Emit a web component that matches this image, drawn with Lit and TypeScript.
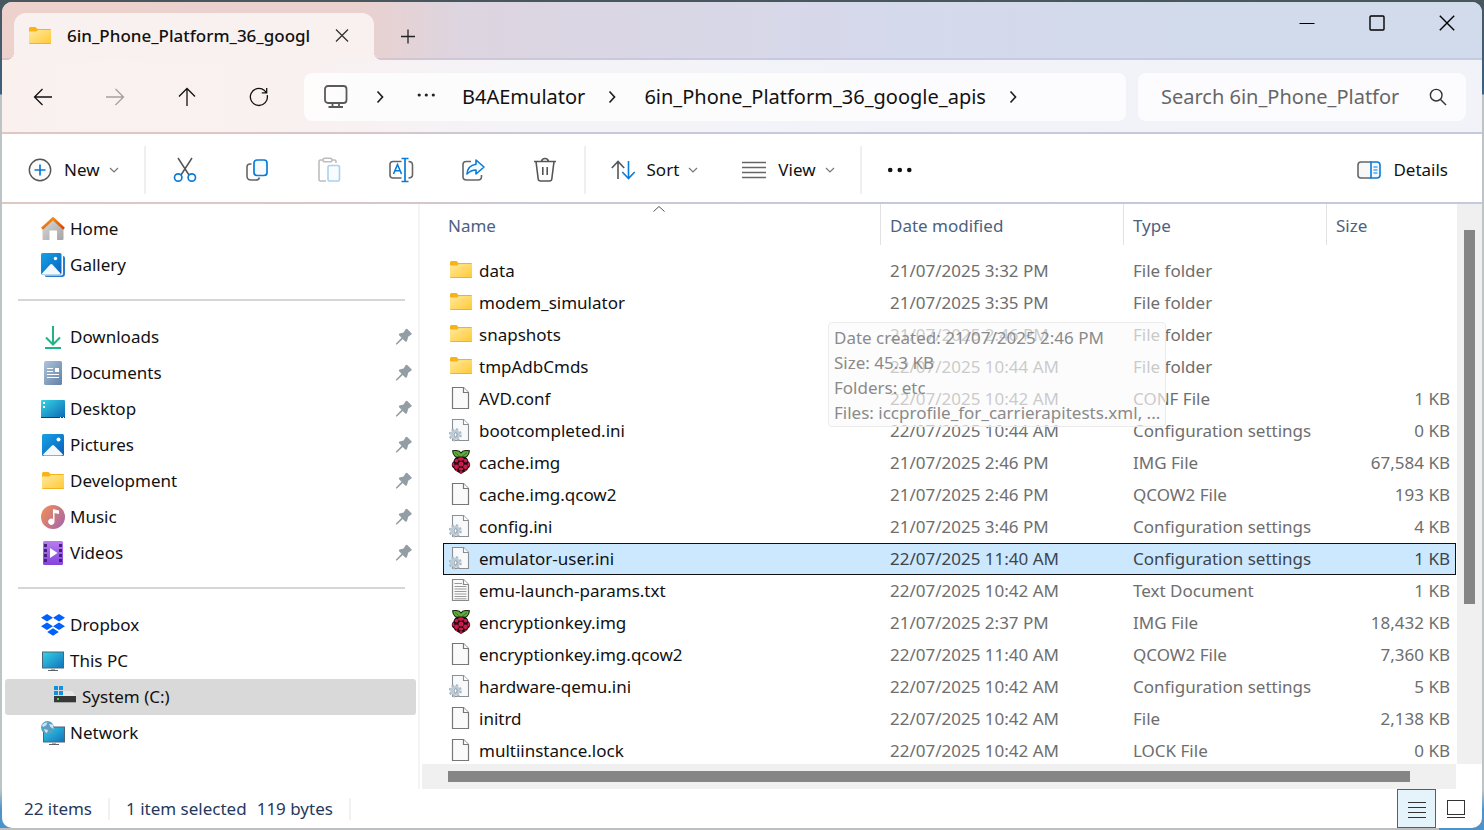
import { LitElement, html, css, TemplateResult } from "lit";
import { customElement, state } from "lit/decorators.js";
import { classMap } from "lit/directives/class-map.js";

type Kind = "folder" | "file" | "ini" | "img" | "txt";

interface Entry {
  kind: Kind;
  name: string;
  date: string;
  type: string;
  size: string;
}

const folderIcon = html`<svg width="24" height="24" viewBox="0 0 24 24" aria-hidden="true">
  <defs><linearGradient id="fold" x1="0" y1="0" x2="1" y2="1"><stop offset="0" stop-color="#ffe9a0" /><stop offset="1" stop-color="#ffc933" /></linearGradient></defs>
  <path d="M1 4.6Q1 3 2.4 3H7.5L9.5 5H22Q23 5 23 6V8H1Z" fill="#f8b318" />
  <path d="M1 7.4H8.3L10 6H23V19Q23 20 22 20H2Q1 20 1 19Z" fill="url(#fold)" />
  <path d="M1 19.2H23Q23 20 22 20H2Q1 20 1 19.2Z" fill="#f0a818" />
</svg>`;

const fileIcon = html`<svg width="24" height="24" viewBox="0 0 24 24" aria-hidden="true">
  <path d="M3.500 1.500H14.500L19.500 6.500V22.500H3.500Z" fill="#fafafa" stroke="#777" stroke-width="1.200" />
  <path d="M14.500 1.500V6.500H19.500" fill="#fff" stroke="#777" stroke-width="1.200" />
</svg>`;

const iniIcon = html`<svg width="24" height="24" viewBox="0 0 24 24" aria-hidden="true">
  <path d="M3.500 1.500H14.500L19.500 6.500V22.500H3.500Z" fill="#f7f9fa" stroke="#8b8f92" stroke-width="1.100" />
  <path d="M14.500 1.500V6.500H19.500" fill="#fff" stroke="#8b8f92" stroke-width="1.100" />
  <circle cx="6.200" cy="16.800" r="5.400" fill="none" stroke="#a9b8c4" stroke-width="2.400" stroke-dasharray="2.200 2.040" />
  <circle cx="6.200" cy="16.800" r="3.600" fill="#e6edf2" stroke="#bccad5" stroke-width="2.800" />
  <ellipse cx="6.600" cy="16.800" rx="1.500" ry="2" fill="#fff" stroke="#778591" stroke-width="0.900" />
</svg>`;

const txtIcon = html`<svg width="24" height="24" viewBox="0 0 24 24" aria-hidden="true">
  <path d="M3.500 1.500H14.500L19.500 6.500V22.500H3.500Z" fill="#fafafa" stroke="#8a8a8a" stroke-width="1.200" />
  <path d="M14.500 1.500V6.500H19.500" fill="#fff" stroke="#8a8a8a" stroke-width="1.200" />
  <path d="M5.500 5.500H13M5.500 8.500H17.500M5.500 11H17.500M5.500 13.500H17.500M5.500 16H17.500M5.500 18.500H17.500M5.500 20.800H17.500" stroke="#9a9a9a" stroke-width="1" />
</svg>`;

const berryIcon = html`<svg width="24" height="24" viewBox="0 0 24 24" aria-hidden="true">
  <path d="M12 8C8 8 4 6 3.6 .8C7 .2 10.500 .4 12 3C13.500 .4 17 .2 20.400 .8C20 6 16 8 12 8Z" fill="#5fae3c" stroke="#1d2a16" stroke-width="1.1" />
  <path d="M6 2.500L11 6.500M18 2.500L13 6.500" stroke="#2f6b1c" stroke-width=".8" />
  <path d="M12 6.500C16 6 19 8 19.500 11.500C22 13.500 21.500 17 19.300 18.300C18.500 21 15.500 22 12 24C8.500 22 5.500 21 4.700 18.300C2.500 17 2 13.500 4.500 11.500C5 8 8 6 12 6.500Z" fill="#1d0910" />
  <g fill="#cf1a4b">
    <ellipse cx="12" cy="9" rx="2.900" ry="1.700" /><ellipse cx="7.500" cy="10.600" rx="2" ry="1.700" transform="rotate(-35 7.500 10.600)" />
    <ellipse cx="16.500" cy="10.600" rx="2" ry="1.700" transform="rotate(35 16.500 10.600)" />
    <circle cx="12" cy="14" r="2.500" /><circle cx="7.500" cy="16.800" r="2.300" /><circle cx="16.500" cy="16.800" r="2.300" />
    <ellipse cx="4.400" cy="14.500" rx="1.100" ry="2" /><ellipse cx="19.600" cy="14.500" rx="1.100" ry="2" />
    <ellipse cx="12" cy="19" rx="2.200" ry="1.600" /><ellipse cx="12" cy="22" rx="1.600" ry=".9" />
    <circle cx="7.500" cy="20.200" r=".8" /><circle cx="16.500" cy="20.200" r=".8" />
  </g>
</svg>`;

const kindIcons: Record<Kind, TemplateResult> = { folder: folderIcon, file: fileIcon, ini: iniIcon, img: berryIcon, txt: txtIcon };

const homeIcon = html`<svg width="24" height="24" viewBox="0 0 24 24" aria-hidden="true">
  <defs>
    <linearGradient id="wall" x1="0" y1="0" x2="1" y2="1"><stop offset="0" stop-color="#dadada" /><stop offset="1" stop-color="#a4a4a4" /></linearGradient>
    <linearGradient id="roof" x1="0" y1="0" x2="1" y2="1"><stop offset="0" stop-color="#f5a11a" /><stop offset="1" stop-color="#d8430c" /></linearGradient>
  </defs>
  <path d="M1.500 11L12 2L22.500 11V22Q22.500 23 21.500 23H16V13.500H8.500V23H2.500Q1.500 23 1.500 22Z" fill="url(#wall)" />
  <path d="M1 11.800L12 1.500L23 11.800" fill="none" stroke="url(#roof)" stroke-width="2.800" stroke-linejoin="round" />
</svg>`;

const galleryIcon = html`<svg width="24" height="24" viewBox="0 0 24 24" aria-hidden="true">
  <defs><linearGradient id="gal" x1="0" y1="0" x2="1" y2="1"><stop offset="0" stop-color="#16a3e6" /><stop offset="1" stop-color="#0a62bd" /></linearGradient></defs>
  <path d="M22 3Q24 3.200 24 5V21Q24 24 21 24H6Q4 24 3.500 22.500H20Q22 22.500 22 20.500Z" fill="#2b7cc8" />
  <rect width="20.500" height="21.500" rx="1.500" fill="url(#gal)" />
  <path d="M1 20.500L9.200 11.600Q10.300 10.600 11.400 11.600L19.600 20.500Q19.300 21.500 18 21.500H2.500Q1.200 21.500 1 20.500Z" fill="#f3f9ff" />
  <circle cx="14.500" cy="5.500" r="1.700" fill="#fff" />
</svg>`;

const downloadsIcon = html`<svg width="24" height="24" viewBox="0 0 24 24" aria-hidden="true">
  <path d="M12 1V19M5 12.500L12 19.500L19 12.500M4 23H20" fill="none" stroke="#1fb487" stroke-width="2" />
</svg>`;

const documentsIcon = html`<svg width="24" height="24" viewBox="0 0 24 24" aria-hidden="true">
  <defs><linearGradient id="docs" x1="0" y1="0" x2="1" y2="1"><stop offset="0" stop-color="#afc4da" /><stop offset="1" stop-color="#6080a5" /></linearGradient></defs>
  <rect x="3" width="18" height="24" rx="1.500" fill="url(#docs)" />
  <path d="M6 7.500H12M6 10.500H12M6 13.500H18M6 16.500H18" stroke="#fff" stroke-width="1.200" />
  <rect x="14" y="7" width="4" height="4" fill="#fff" />
</svg>`;

const desktopIcon = html`<svg width="24" height="24" viewBox="0 0 24 24" aria-hidden="true">
  <defs><linearGradient id="desk" x1="0" y1="0" x2="1" y2="1"><stop offset="0" stop-color="#36d5e4" /><stop offset="1" stop-color="#0a67b5" /></linearGradient></defs>
  <rect y="3" width="24" height="18" rx="1" fill="url(#desk)" />
  <path d="M0 20H24V20.500Q24 21 23 21H1Q0 21 0 20.500Z" fill="#0c3f66" />
  <path d="M2 5H4V7H2ZM2 9H4V11H2Z" fill="#fff" /><path d="M19 20.500H20M22 20.500H23" stroke="#fff" />
</svg>`;

const picturesIcon = html`<svg width="24" height="24" viewBox="0 0 24 24" aria-hidden="true">
  <defs><linearGradient id="pic" x1="0" y1="0" x2="1" y2="1"><stop offset="0" stop-color="#17a2e6" /><stop offset="1" stop-color="#0a5eb8" /></linearGradient></defs>
  <rect x="1" y="1" width="22" height="22" rx="1.500" fill="url(#pic)" />
  <path d="M2 21.500L11 12.500Q12 11.700 13 12.500L22 21.500Q21.500 22.400 20.500 22.400H3.500Q2.500 22.400 2 21.500Z" fill="#f2f8fe" />
  <circle cx="17.500" cy="6.500" r="2" fill="#fff" />
</svg>`;

const musicIcon = html`<svg width="24" height="24" viewBox="0 0 24 24" aria-hidden="true">
  <defs><linearGradient id="mus" x1="0" y1="0.200" x2="1" y2="0.900"><stop offset="0" stop-color="#ee8d57" /><stop offset="1" stop-color="#a564ae" /></linearGradient></defs>
  <circle cx="12" cy="12" r="12" fill="url(#mus)" />
  <path d="M12 4L18 5.500V9L13.500 8V16.500A3.200 3.200 0 1 1 12 14Z" fill="#fff" />
</svg>`;

const videosIcon = html`<svg width="24" height="24" viewBox="0 0 24 24" aria-hidden="true">
  <defs><linearGradient id="vid" x1="0" y1="0" x2="0" y2="1"><stop offset="0" stop-color="#b97bf0" /><stop offset="1" stop-color="#8344dd" /></linearGradient></defs>
  <rect x="2" width="20" height="24" rx="1.500" fill="url(#vid)" />
  <path d="M4.500 3V22M19.500 3V22" stroke="#45207c" stroke-width="3" stroke-dasharray="3 2" />
  <path d="M9 7L16.500 12L9 17Z" fill="#fff" />
</svg>`;

const dropboxIcon = html`<svg width="24" height="24" viewBox="0 0 24 24" aria-hidden="true">
  <path d="M6 1L12 4.800L6 8.600L0 4.800ZM18 1L24 4.800L18 8.600L12 4.800ZM6 9.400L12 13.200L6 17L0 13.200ZM18 9.400L24 13.200L18 17L12 13.200ZM12 15.300L17.800 19L12 22.700L6.200 19Z" fill="#0061fe" />
</svg>`;

const pcIcon = html`<svg width="24" height="24" viewBox="0 0 24 24" aria-hidden="true">
  <defs><linearGradient id="pc" x1="0" y1="0" x2="1" y2="1"><stop offset="0" stop-color="#35d3e6" /><stop offset="1" stop-color="#1272bd" /></linearGradient></defs>
  <rect x="1.500" y="3" width="21" height="16" fill="url(#pc)" stroke="#4a6678" />
  <path d="M10 19.500H14V21H10Z" fill="#a9b1b8" /><path d="M7 21.500H17" stroke="#59626a" />
</svg>`;

const driveIcon = html`<svg width="24" height="24" viewBox="0 0 24 24" aria-hidden="true">
  <path d="M1 1H5V5H1ZM6 1H10V5H6ZM1 6H5V10H1ZM6 6H10V10H6Z" fill="#1291e0" />
  <path d="M10 6H19L23 11H10Z" fill="#e8e8e8" />
  <rect x="1" y="11" width="22" height="6" fill="#383838" /><path d="M1 17.500H23" stroke="#a9a9a9" />
  <rect x="4" y="13" width="2" height="2" fill="#38e02c" />
</svg>`;

const networkIcon = html`<svg width="24" height="24" viewBox="0 0 24 24" aria-hidden="true">
  <defs><linearGradient id="net" x1="0" y1="0" x2="1" y2="1"><stop offset="0" stop-color="#35cfe4" /><stop offset="1" stop-color="#1272bd" /></linearGradient></defs>
  <rect x="2.500" y="6" width="21" height="15" fill="url(#net)" stroke="#4a6678" />
  <path d="M11 21.500H15V23H11Z" fill="#a9b1b8" /><path d="M8 23.500H18" stroke="#59626a" />
  <circle cx="6.500" cy="6.500" r="6.500" fill="#5c9fc4" />
  <path d="M1 4Q4 1 6.500 1.500L5 4.500L2 6ZM8 3L12 3.500L12.500 8L9.500 6ZM3 8L7 9L6 12Q3.500 11 3 8Z" fill="#d3e6ee" />
</svg>`;

const pinIcon = html`<svg width="18" height="18" viewBox="0 0 18 18" aria-hidden="true">
  <path d="M10.800 .9Q11.500 .4 12.200 1L16.500 5.200Q17.100 5.900 16.400 6.500L13.200 8.800L12 13Q11.400 14.300 10.300 13.400L7.700 10.900L2 16.500H1V15.400L6.500 9.700L4.100 7.200Q3.300 6.200 4.500 5.600L8.600 4.400Z" fill="#929da4" />
</svg>`;

const chevronDown = html`<svg class="caret" width="10" height="10" viewBox="0 0 10 10" aria-hidden="true">
  <path d="M1 3L5 7L9 3" fill="none" stroke="#777" stroke-width="1.200" />
</svg>`;

const chevronRight = html`<svg width="10" height="14" viewBox="0 0 10 14" aria-hidden="true">
  <path d="M2.500 1.500L7.500 7L2.500 12.500" fill="none" stroke="#222" stroke-width="1.700" />
</svg>`;

const cutIcon = html`<svg width="24" height="26" viewBox="0 0 24 26" fill="none" aria-hidden="true">
  <path d="M5 1L16 18M19 1L8 18" stroke="#555" stroke-width="1.500" />
  <circle cx="5.200" cy="20.500" r="3.700" stroke="#0a7bd6" stroke-width="1.700" /><circle cx="18.800" cy="20.500" r="3.700" stroke="#0a7bd6" stroke-width="1.700" />
</svg>`;

const copyIcon = html`<svg width="24" height="24" viewBox="0 0 24 24" fill="none" aria-hidden="true">
  <path d="M6.500 6H5Q2 6 2 9V18Q2 22 6 22H11Q14 22 14.500 19.500" stroke="#666" stroke-width="1.600" />
  <rect x="9" y="2" width="13" height="15.500" rx="3" fill="#f7fbff" stroke="#0a7bd6" stroke-width="1.700" />
</svg>`;

const pasteIcon = html`<svg width="24" height="26" viewBox="0 0 24 26" fill="none" aria-hidden="true">
  <path d="M9 24H3.500Q2 24 2 22.500V4.500Q2 3 3.500 3H6M15 3H17.500Q19 3 19 4.500V6" stroke="#bdbdbd" stroke-width="1.600" />
  <rect x="6" y="1.200" width="9" height="3.600" rx="1.800" stroke="#bdbdbd" stroke-width="1.500" />
  <rect x="11" y="8.500" width="11.500" height="15.500" rx="1.500" fill="#f8fbff" stroke="#a9d1f2" stroke-width="1.600" />
</svg>`;

const renameIcon = html`<svg width="26" height="26" viewBox="0 0 26 26" fill="none" aria-hidden="true">
  <path d="M13.500 4.500H5Q2 4.500 2 7.500V18Q2 21 5 21H13.500M20.500 4.500Q24.500 4.500 24.500 8V17.500Q24.500 21 20.500 21" stroke="#666" stroke-width="1.600" />
  <path d="M5.500 17L9.500 7.500L13.500 17M7 13.800H12" stroke="#0a7bd6" stroke-width="1.600" />
  <path d="M17 1.500V24.500M13.500 1.500H20.500M13.500 24.500H20.500" stroke="#0a7bd6" stroke-width="1.700" />
</svg>`;

const shareIcon = html`<svg width="26" height="24" viewBox="0 0 26 24" fill="none" aria-hidden="true">
  <path d="M11 3.500H6Q3 3.500 3 6.500V18.500Q3 22 6.500 22H18Q21.500 22 21.500 18.500V17" stroke="#666" stroke-width="1.600" />
  <path d="M16 2L24 9L16 16V12Q11 12 7 16Q7.500 7.500 16 6.200Z" fill="#f5faff" stroke="#0a7bd6" stroke-width="1.600" stroke-linejoin="round" />
</svg>`;

const deleteIcon = html`<svg width="24" height="26" viewBox="0 0 24 26" fill="none" stroke="#555" aria-hidden="true">
  <path d="M1 4.500H23M8.500 4.500Q9 1.500 12 1.500Q15 1.500 15.500 4.500M3 4.500L5.200 22Q5.500 24 7.500 24H16.500Q18.500 24 18.800 22L21 4.500" stroke-width="1.600" />
  <path d="M9.800 10V18M14.200 10V18" stroke-width="1.600" />
</svg>`;

const entries: Entry[] = [
  { kind: "folder", name: "data", date: "21/07/2025 3:32 PM", type: "File folder", size: "" },
  { kind: "folder", name: "modem_simulator", date: "21/07/2025 3:35 PM", type: "File folder", size: "" },
  { kind: "folder", name: "snapshots", date: "21/07/2025 2:46 PM", type: "File folder", size: "" },
  { kind: "folder", name: "tmpAdbCmds", date: "22/07/2025 10:44 AM", type: "File folder", size: "" },
  { kind: "file", name: "AVD.conf", date: "22/07/2025 10:42 AM", type: "CONF File", size: "1 KB" },
  { kind: "ini", name: "bootcompleted.ini", date: "22/07/2025 10:44 AM", type: "Configuration settings", size: "0 KB" },
  { kind: "img", name: "cache.img", date: "21/07/2025 2:46 PM", type: "IMG File", size: "67,584 KB" },
  { kind: "file", name: "cache.img.qcow2", date: "21/07/2025 2:46 PM", type: "QCOW2 File", size: "193 KB" },
  { kind: "ini", name: "config.ini", date: "21/07/2025 3:46 PM", type: "Configuration settings", size: "4 KB" },
  { kind: "ini", name: "emulator-user.ini", date: "22/07/2025 11:40 AM", type: "Configuration settings", size: "1 KB" },
  { kind: "txt", name: "emu-launch-params.txt", date: "22/07/2025 10:42 AM", type: "Text Document", size: "1 KB" },
  { kind: "img", name: "encryptionkey.img", date: "21/07/2025 2:37 PM", type: "IMG File", size: "18,432 KB" },
  { kind: "file", name: "encryptionkey.img.qcow2", date: "22/07/2025 11:40 AM", type: "QCOW2 File", size: "7,360 KB" },
  { kind: "ini", name: "hardware-qemu.ini", date: "22/07/2025 10:42 AM", type: "Configuration settings", size: "5 KB" },
  { kind: "file", name: "initrd", date: "22/07/2025 10:42 AM", type: "File", size: "2,138 KB" },
  { kind: "file", name: "multiinstance.lock", date: "22/07/2025 10:42 AM", type: "LOCK File", size: "0 KB" },
];

@customElement("app-root")
export class AppRoot extends LitElement {
  @state() private selected = "emulator-user.ini";

  static styles = css`
    :host {
      display: block;
      height: 100vh;
      box-sizing: border-box;
      padding: 2px;
      overflow: hidden;
      background:
        linear-gradient(#48565e, #48565e) top / 100% 2px no-repeat,
        linear-gradient(90deg, #bdbfc0 97%, #4b93c8 97%) bottom / 100% 2px no-repeat,
        linear-gradient(#48565e 0, #3d6180 94px, #bcc4c5 95px, #bcc4c5 790px, #4b93c8 810px);
      font-family: "Noto Sans", "Open Sans", sans-serif;
      font-size: 17px;
      line-height: 24px;
      color: #111;
    }
    *, *::before, *::after { box-sizing: border-box; }
    svg { display: block; flex: none; }
    button, input { font: inherit; color: inherit; border: 0; padding: 0; margin: 0; background: none; }
    button { display: flex; align-items: center; justify-content: center; }
    a { color: inherit; text-decoration: none; }
    .window {
      display: flex; flex-direction: column; height: 100%;
      border-radius: 10px; overflow: hidden; background: #fff;
    }
    .titlebar {
      display: flex; align-items: stretch; flex: none; height: 58px; padding-left: 12px;
      background: linear-gradient(90deg, #edd1cc 0, #ead1ce 24%, #ddd5e0 31%, #d5d9ec 60%, #d1dbeb 85%);
      box-shadow: inset 0 -2px rgba(150, 150, 190, 0.22);
    }
    .tab {
      position: relative; display: flex; align-items: center; width: 360px; margin-top: 11px;
      padding: 0 20px 1px 14px; border-radius: 12px 12px 0 0; background: #f9f1f0;
    }
    .tab::before, .tab::after {
      content: ""; position: absolute; bottom: 0; width: 8px; height: 8px;
    }
    .tab::before { left: -8px; background: radial-gradient(circle at 0 0, transparent 8px, #f9f1f0 8px); }
    .tab::after { right: -8px; background: radial-gradient(circle at 100% 0, transparent 8px, #f9f1f0 8px); }
    .tab-title { flex: 1; min-width: 0; margin-left: 15px; overflow: hidden; white-space: nowrap; font-weight: 500; }
    .tab-close { width: 24px; height: 24px; }
    .new-tab { width: 44px; margin: 10px 0 0 12px; }
    .window-controls { display: flex; margin-left: auto; height: 41px; }
    .window-controls button { width: 70px; }
    .navbar {
      display: flex; align-items: center; flex: none; height: 74px; padding: 2px 16px 0 10px;
      background: linear-gradient(90deg, #faf1ef 0, #f9f1f1 22%, #f4f3f8 34%, #f2f3f9 60%, #f1f3f9 100%);
    }
    .navbar, .toolbar {
      border-bottom: 2px solid;
      border-image: linear-gradient(90deg, #dfc8c4 0, #d9c6c8 22%, #cbc8d6 36%, #c3cade 80%) 1;
    }
    .nav-button { width: 72px; height: 48px; padding-right: 11px; }
    .nav-button:disabled { color: #a5a0a0; }
    .address {
      display: flex; align-items: center; flex: 1; height: 48px; margin-left: 4px; padding-left: 20px;
      border-radius: 8px; background: rgba(255, 255, 255, 0.75); font-size: 20px; white-space: nowrap;
    }
    .place-kind { margin-right: 27px; }
    .overflow { margin: 0 26px 0 31px; }
    .crumb-gap { margin: 0 27px 0 22px; }
    .search {
      display: flex; align-items: center; flex: none; width: 328px; height: 48px; margin-left: 12px;
      padding: 0 19px 0 23px; border-radius: 8px; background: rgba(255, 255, 255, 0.75);
    }
    .search input { flex: 1; min-width: 0; margin-right: 30px; font-size: 20px; outline: 0; }
    .search input::placeholder { color: #666; opacity: 1; }
    .toolbar { display: flex; align-items: center; flex: none; height: 70px; padding: 4px 34px 0 26px; }
    .toolbar button { flex: none; height: 48px; }
    .toolbar .menu { margin: 0 22px; }
    .toolbar .menu:first-child { margin-left: 0; }
    .label { margin-left: 12px; }
    .caret { margin-left: 9px; }
    .tool { width: 72px; }
    .details { margin-left: auto; }
    .divider { flex: none; width: 2px; height: 48px; margin: 0 3px; background: #efefef; }
    .body { display: flex; flex: 1; min-height: 0; }
    .sidebar {
      flex: none; width: 418px; padding: 7px 2px 0 3px; border-right: 2px solid #f4f4f4;
    }
    .place {
      display: flex; align-items: center; height: 36px; padding: 0 3px 1px 36px; border-radius: 3px;
    }
    .place span { flex: 1; margin-left: 5px; }
    .place.nested { padding-left: 48px; background: #d9d9d9; }
    .rule { height: 2px; margin: 16px 11px 18px 13px; border: 0; background: #d6d6d6; }
    .files { position: relative; display: flex; flex: 1; flex-direction: column; min-width: 0; padding-left: 2px; }
    .list { display: flex; flex: 1; min-height: 0; }
    .rows { flex: 1; min-width: 0; overflow: hidden; padding-left: 21px; }
    table { width: 100%; table-layout: fixed; border-collapse: separate; border-spacing: 0; }
    .col-date { width: 243px; }
    .col-type { width: 203px; }
    .col-size { width: 130px; }
    th { height: 51px; padding: 0 0 10px; text-align: left; font-weight: 400; color: #4d6180; vertical-align: top; }
    .head { display: flex; align-items: center; height: 41px; padding: 2px 0 0 9px; border-left: 1px solid #e2e2e2; }
    th:first-child .head { padding-left: 5px; border-left: 0; }
    .sorted { position: absolute; top: 1px; left: 232px; }
    td { height: 32px; padding: 0 0 0 10px; color: #6e6e6e; white-space: nowrap; border: 0 solid #111; }
    td:first-child { padding-left: 6px; color: #111; }
    td:last-child { padding-right: 6px; text-align: right; }
    .name { display: flex; align-items: center; }
    .name svg { margin: 0 6px 2px 0; }
    .picked td { background: #cce8ff; color: #3d454c; border-width: 1px 0; }
    .picked td:first-child { border-left-width: 1px; padding-left: 5px; color: #111; }
    .picked td:last-child { border-right-width: 1px; padding-right: 5px; }
    .vscroll { flex: none; width: 25px; margin-left: 1px; padding: 26px 7px 0; background: #f0f0f0; }
    .vthumb { height: 70%; background: #858585; }
    .hscroll { flex: none; height: 25px; margin-right: 26px; padding: 7px 46px 0 26px; background: #f0f0f0; }
    .hthumb { height: 11px; background: #858585; }
    .tip {
      position: absolute; top: 118px; left: 408px; height: 105px; padding: 2px 5px;
      border: 1px solid #ececec; border-radius: 4px; background: rgba(250, 250, 250, 0.66);
      color: #8a8a8a; line-height: 25px; white-space: nowrap;
    }
    .tip p { margin: 0; }
    .status { display: flex; align-items: center; flex: none; height: 39px; padding: 0 7px 0 22px; color: #26395c; }
    .status i { width: 2px; height: 22px; margin: 0 16px; background: #f1f1f1; }
    .status span + span { margin-left: 10px; }
    .views { display: flex; margin-left: auto; }
    .views button { width: 39px; height: 39px; }
    .views .on { border: 1px solid #0a74cc; background: #e5f3fb; }
  `;

  private place(label: string, icon: TemplateResult, pinned = false, nested = false) {
    return html`<a href="#" class=${classMap({ place: true, nested })}>${icon}<span>${label}</span>${pinned ? pinIcon : null}</a>`;
  }

  render() {
    return html`
      <main class="window">
        <header class="titlebar">
          <div class="tab">
            ${folderIcon}
            <span class="tab-title">6in_Phone_Platform_36_googl</span>
            <button class="tab-close" aria-label="Close tab">
              <svg width="16" height="16" viewBox="0 0 16 16"><path d="M2 1.500L14 13.500M14 1.500L2 13.500" stroke="#333" stroke-width="1.300" /></svg>
            </button>
          </div>
          <button class="new-tab" aria-label="New tab">
            <svg width="16" height="16" viewBox="0 0 16 16"><path d="M1 8.500H15M8 1.500V15.500" stroke="#222" stroke-width="1.300" /></svg>
          </button>
          <div class="window-controls">
            <button aria-label="Minimize"><svg width="16" height="16" viewBox="0 0 16 16"><path d="M.5 8.500H15.500" stroke="#000" /></svg></button>
            <button aria-label="Maximize"><svg width="16" height="16" viewBox="0 0 16 16"><rect x="1" y="1" width="14" height="14" rx="1" fill="none" stroke="#000" stroke-width="1.400" /></svg></button>
            <button aria-label="Close"><svg width="16" height="16" viewBox="0 0 16 16"><path d="M.8 .8L15.200 15.200M15.200 .8L.8 15.200" stroke="#000" stroke-width="1.400" /></svg></button>
          </div>
        </header>

        <nav class="navbar" aria-label="Navigation">
          <button class="nav-button" aria-label="Back"><svg width="20" height="20" viewBox="0 0 20 20" fill="none" stroke="currentColor" stroke-width="1.300"><path d="M19 10H1.500M9.500 2L1.500 10L9.500 18" /></svg></button>
          <button class="nav-button" aria-label="Forward" disabled><svg width="20" height="20" viewBox="0 0 20 20" fill="none" stroke="currentColor" stroke-width="1.300"><path d="M1 10H18.500M10.500 2L18.500 10L10.500 18" /></svg></button>
          <button class="nav-button" aria-label="Up"><svg width="20" height="20" viewBox="0 0 20 20" fill="none" stroke="currentColor" stroke-width="1.300"><path d="M10 19V1.500M2 9.500L10 1.500L18 9.500" /></svg></button>
          <button class="nav-button" aria-label="Refresh"><svg width="20" height="20" viewBox="0 0 20 20" fill="none" stroke="currentColor" stroke-width="1.300"><path d="M18.200 8.200A8.500 8.500 0 1 1 15.500 3.600L17.600 5.700M17.700 1V5.900H12.800" /></svg></button>
          <div class="address">
            <svg class="place-kind" width="24" height="24" viewBox="0 0 24 24" fill="none" stroke="#5a5a5a" stroke-width="1.800"><rect x="1" y="1" width="21.500" height="17" rx="3" /><path d="M8.500 18V22M15 18V22M4.500 22H19" /></svg>
            ${chevronRight}
            <svg class="overflow" width="20" height="14" viewBox="0 0 20 14" fill="#222"><circle cx="3.200" cy="5" r="1.600" /><circle cx="10.300" cy="5" r="1.600" /><circle cx="17.300" cy="5" r="1.600" /></svg>
            <a href="#">B4AEmulator</a>
            <span class="crumb-gap">${chevronRight}</span>
            <a href="#">6in_Phone_Platform_36_google_apis</a>
            <span class="crumb-gap">${chevronRight}</span>
          </div>
          <label class="search">
            <input type="text" aria-label="Search" placeholder="Search 6in_Phone_Platform_36_google_apis" />
            <svg width="18" height="18" viewBox="0 0 18 18" fill="none" stroke="#333" stroke-width="1.400"><circle cx="7.200" cy="7.200" r="5.800" /><path d="M11.500 11.500L17 17" /></svg>
          </label>
        </nav>

        <div class="toolbar" role="toolbar">
          <button class="menu">
            <svg width="24" height="24" viewBox="0 0 24 24" fill="none"><circle cx="12" cy="12" r="10.700" fill="#fbfbfb" stroke="#555" stroke-width="1.400" /><path d="M6.500 12H17.500M12 6.500V17.500" stroke="#0a7bd6" stroke-width="1.700" /></svg>
            <span class="label">New</span>${chevronDown}
          </button>
          <span class="divider"></span>
          <button class="tool" aria-label="Cut">${cutIcon}</button>
          <button class="tool" aria-label="Copy">${copyIcon}</button>
          <button class="tool" aria-label="Paste">${pasteIcon}</button>
          <button class="tool" aria-label="Rename">${renameIcon}</button>
          <button class="tool" aria-label="Share">${shareIcon}</button>
          <button class="tool" aria-label="Delete">${deleteIcon}</button>
          <span class="divider"></span>
          <button class="menu">
            <svg width="24" height="20" viewBox="0 0 24 20" fill="none" stroke-width="1.600"><path d="M7 19V1.500M.8 8L7 1.500L13.200 8" stroke="#555" /><path d="M17.500 1V18.500M11.300 12L17.500 18.500L23.700 12" stroke="#0a7bd6" /></svg>
            <span class="label">Sort</span>${chevronDown}
          </button>
          <button class="menu">
            <svg width="24" height="18" viewBox="0 0 24 18"><path d="M0 1.500H24M0 6.500H24M0 11.500H24M0 16.500H24" stroke="#666" stroke-width="1.500" /></svg>
            <span class="label">View</span>${chevronDown}
          </button>
          <span class="divider"></span>
          <button class="menu" aria-label="See more"><svg width="26" height="6" viewBox="0 0 26 6" fill="#111"><circle cx="3.200" cy="3" r="2.300" /><circle cx="12.800" cy="3" r="2.300" /><circle cx="22.300" cy="3" r="2.300" /></svg></button>
          <button class="details">
            <svg width="24" height="18" viewBox="0 0 24 18" fill="none" stroke-width="1.600"><path d="M14 1H4Q1 1 1 4V14Q1 17 4 17H14" fill="#f8f8f8" stroke="#666" /><path d="M14 1H20Q23 1 23 4V14Q23 17 20 17H14Z" fill="#f3f9ff" stroke="#0a7bd6" /><path d="M16.500 6H20.500M16.500 9H20.500M16.500 12H20.500" stroke="#0a7bd6" stroke-width="1.200" /></svg>
            <span class="label">Details</span>
          </button>
        </div>

        <div class="body">
          <nav class="sidebar" aria-label="Places">
            ${this.place("Home", homeIcon)} ${this.place("Gallery", galleryIcon)}
            <hr class="rule" />
            ${this.place("Downloads", downloadsIcon, true)} ${this.place("Documents", documentsIcon, true)}
            ${this.place("Desktop", desktopIcon, true)} ${this.place("Pictures", picturesIcon, true)}
            ${this.place("Development", folderIcon, true)} ${this.place("Music", musicIcon, true)}
            ${this.place("Videos", videosIcon, true)}
            <hr class="rule" />
            ${this.place("Dropbox", dropboxIcon)} ${this.place("This PC", pcIcon)}
            ${this.place("System (C:)", driveIcon, false, true)} ${this.place("Network", networkIcon)}
          </nav>
          <section class="files">
            <div class="list">
              <div class="rows">
                <table>
                  <colgroup><col /><col class="col-date" /><col class="col-type" /><col class="col-size" /></colgroup>
                  <thead>
                    <tr>
                      <th scope="col" aria-sort="ascending"><div class="head">Name</div></th>
                      <th scope="col"><div class="head">Date modified</div></th>
                      <th scope="col"><div class="head">Type</div></th>
                      <th scope="col"><div class="head">Size</div></th>
                    </tr>
                  </thead>
                  <tbody>
                    ${entries.map(
                      (e) => html`<tr class=${classMap({ picked: e.name === this.selected })} @click=${() => (this.selected = e.name)}>
                        <td><div class="name">${kindIcons[e.kind]}${e.name}</div></td>
                        <td>${e.date}</td>
                        <td>${e.type}</td>
                        <td>${e.size}</td>
                      </tr>`
                    )}
                  </tbody>
                </table>
              </div>
              <div class="vscroll"><div class="vthumb"></div></div>
            </div>
            <div class="hscroll"><div class="hthumb"></div></div>
            <svg class="sorted" width="14" height="8" viewBox="0 0 14 8" aria-hidden="true"><path d="M1.500 6.500L7 1.500L12.500 6.500" fill="none" stroke="#555" /></svg>
            <div class="tip" role="tooltip">
              <p>Date created: 21/07/2025 2:46 PM</p>
              <p>Size: 45.3 KB</p>
              <p>Folders: etc</p>
              <p>Files: iccprofile_for_carrierapitests.xml, ...</p>
            </div>
          </section>
        </div>

        <footer class="status">
          <span>22 items</span><i></i><span>1 item selected</span><span>119 bytes</span><i></i>
          <div class="views">
            <button class="on" aria-label="Details view"><svg width="20" height="20" viewBox="0 0 20 20"><path d="M1 3.500H19M1 8.500H19M1 13.500H19M1 18.500H19" stroke="#333" /></svg></button>
            <button aria-label="Large icons view"><svg width="20" height="20" viewBox="0 0 20 20" fill="none" stroke="#333"><rect x="1.500" y="1.500" width="17" height="14" /><path d="M1 18.500H19" /></svg></button>
          </div>
        </footer>
      </main>
    `;
  }
}
